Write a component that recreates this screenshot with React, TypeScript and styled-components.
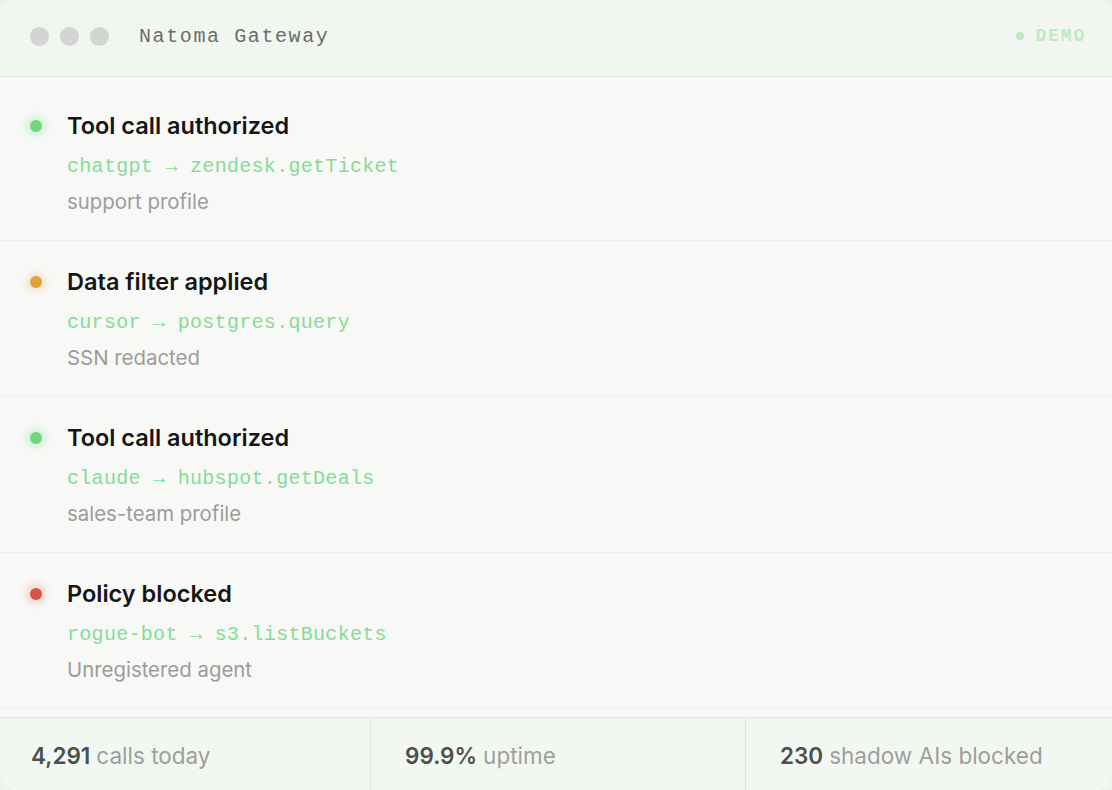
import React from 'react';
import styled, { createGlobalStyle } from 'styled-components';

const GlobalStyle = createGlobalStyle`
  html, body {
    margin: 0;
    padding: 0;
    background: #eef2ec;
  }
  #root {
    height: 790px;
  }
`;

type Status = 'ok' | 'warn' | 'blocked';

const statusColor: Record<Status, string> = {
  ok: '#6fd77c',
  warn: '#e4a23a',
  blocked: '#d9534a',
};

const statusGlow: Record<Status, string> = {
  ok: 'rgba(111, 215, 124, 0.35)',
  warn: 'rgba(228, 162, 58, 0.3)',
  blocked: 'rgba(217, 83, 74, 0.3)',
};

interface EventItem {
  status: Status;
  title: string;
  agent: string;
  target: string;
  note: string;
}

const events: EventItem[] = [
  { status: 'ok', title: 'Tool call authorized', agent: 'chatgpt', target: 'zendesk.getTicket', note: 'support profile' },
  { status: 'warn', title: 'Data filter applied', agent: 'cursor', target: 'postgres.query', note: 'SSN redacted' },
  { status: 'ok', title: 'Tool call authorized', agent: 'claude', target: 'hubspot.getDeals', note: 'sales-team profile' },
  { status: 'blocked', title: 'Policy blocked', agent: 'rogue-bot', target: 's3.listBuckets', note: 'Unregistered agent' },
];

const stats = [
  { value: '4,291', label: 'calls today' },
  { value: '99.9%', label: 'uptime' },
  { value: '230', label: 'shadow AIs blocked' },
];

const Window = styled.div`
  height: 790px;
  display: flex;
  flex-direction: column;
  background: #f8f9f7;
  border-radius: 16px;
  overflow: hidden;
  font-family: Inter, 'Noto Sans', sans-serif;
`;

const TitleBar = styled.header`
  height: 77px;
  box-sizing: border-box;
  flex-shrink: 0;
  display: flex;
  align-items: center;
  padding: 0 27px 4px 30px;
  background: #f2f6f0;
  border-bottom: 1px solid #e1e5df;
`;

const Lights = styled.div`
  display: flex;
  gap: 11px;
`;

const Light = styled.span`
  width: 19px;
  height: 19px;
  border-radius: 50%;
  background: #d2d5d1;
`;

const AppName = styled.div`
  margin-left: 30px;
  font-family: 'Liberation Mono', 'DejaVu Sans Mono', monospace;
  font-size: 20px;
  letter-spacing: 1.6px;
  color: #6b6d6a;
`;

const DemoTag = styled.div`
  margin-left: auto;
  display: flex;
  align-items: center;
  gap: 12px;
  font-family: 'Liberation Mono', 'DejaVu Sans Mono', monospace;
  font-weight: 700;
  font-size: 18px;
  letter-spacing: 1.8px;
  color: #bfe9c5;
  margin-right: -1px;

  &::before {
    content: '';
    width: 8px;
    height: 8px;
    border-radius: 50%;
    background: #bfe9c5;
  }
`;

const EventList = styled.ul`
  list-style: none;
  margin: 0;
  padding: 8px 0;
  flex: 1;
  border-bottom: 1px solid #e1e5df;
`;

const EventRow = styled.li`
  height: 156px;
  box-sizing: border-box;
  display: flex;
  align-items: flex-start;
  gap: 25px;
  padding: 26px 30px 0 30px;
  border-bottom: 1px solid #eef0ec;
`;

const Dot = styled.span<{ $status: Status }>`
  flex-shrink: 0;
  width: 12px;
  height: 12px;
  margin-top: 9px;
  border-radius: 50%;
  background: ${(p) => statusColor[p.$status]};
  box-shadow: 0 0 8px 3px ${(p) => statusGlow[p.$status]};
`;

const EventBody = styled.div`
  display: flex;
  flex-direction: column;
`;

const EventTitle = styled.div`
  font-size: 23.5px;
  font-weight: 600;
  line-height: 30px;
  color: #151615;
`;

const Route = styled.div`
  margin-top: 12px;
  font-family: 'Liberation Mono', 'DejaVu Sans Mono', monospace;
  font-size: 20px;
  letter-spacing: 0.3px;
  line-height: 28px;
  color: #86dc94;
`;

const Note = styled.div`
  margin-top: 7px;
  font-size: 20.4px;
  line-height: 28px;
  color: #9b9c9a;
`;

const Footer = styled.footer`
  height: 75px;
  flex-shrink: 0;
  display: grid;
  grid-template-columns: 370px 375px 1fr;
  background: #f3f7f1;
`;

const Stat = styled.div<{ $inset: number }>`
  display: flex;
  align-items: center;
  padding-left: ${(p) => p.$inset}px;
  font-size: 22.5px;
  color: #9d9f9c;

  & + & {
    border-left: 1px solid #e1e5df;
  }
`;

const StatValue = styled.strong`
  font-weight: 600;
  color: #4b504b;
  margin-right: 6px;
`;

export default function App() {
  return (
    <>
      <GlobalStyle />
      <Window>
        <TitleBar>
          <Lights>
            <Light />
            <Light />
            <Light />
          </Lights>
          <AppName>Natoma Gateway</AppName>
          <DemoTag>DEMO</DemoTag>
        </TitleBar>
        <EventList>
          {events.map((e, i) => (
            <EventRow key={i}>
              <Dot $status={e.status} />
              <EventBody>
                <EventTitle>{e.title}</EventTitle>
                <Route>
                  {e.agent} → {e.target}
                </Route>
                <Note>{e.note}</Note>
              </EventBody>
            </EventRow>
          ))}
        </EventList>
        <Footer>
          {stats.map((s, i) => (
            <Stat key={s.label} $inset={i === 0 ? 31 : 34}>
              <StatValue>{s.value}</StatValue>
              {s.label}
            </Stat>
          ))}
        </Footer>
      </Window>
    </>
  );
}
